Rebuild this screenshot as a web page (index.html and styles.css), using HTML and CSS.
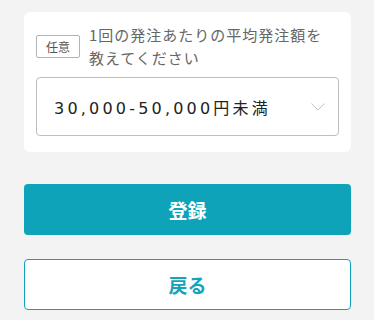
FILE: index.html
```html
<!DOCTYPE html>
<html lang="ja">
<head>
  <meta charset="UTF-8" />
  <meta name="viewport" content="width=device-width, initial-scale=1.0" />
  <title>発注額</title>
  <link rel="stylesheet" href="styles.css">
</head>
<body>
  <div class="page">
    <div class="card">
      <div class="question">
        <span class="badge">任意</span>
        <p class="question-text">1回の発注あたりの平均発注額を教えてください</p>
      </div>
      <div class="select">
        <span class="select-value">30,000-50,000円未満</span>
        <svg class="chevron" width="14" height="8" viewBox="0 0 14 8">
          <polyline points="0.5,0.5 7,7 13.5,0.5" fill="none" stroke="#c4c4c4" stroke-width="1" />
        </svg>
      </div>
    </div>

    <div class="actions">
      <button class="btn btn-primary">登録</button>
      <button class="btn btn-outline">戻る</button>
    </div>
  </div>
</body>
</html>
```

FILE: styles.css
```css
body {
  margin: 0;
  background-color: #f3f3f3;
  font-family: "Noto Sans CJK JP", "Noto Sans", sans-serif;
}

.page {
  padding: 12px 23px 0 24px;
}

.card {
  background-color: #fff;
  border-radius: 6px;
  padding: 11px 12px 16px;
}

.question {
  display: flex;
  align-items: center;
  gap: 9px;
}

.badge {
  flex: none;
  width: 42px;
  height: 21px;
  border: 1px solid #b3b3b3;
  border-radius: 2px;
  font-size: 12px;
  line-height: 21px;
  text-align: center;
  color: #555;
}

.question-text {
  margin: 0;
  padding-right: 8px;
  font-size: 15px;
  line-height: 23px;
  letter-spacing: 1px;
  color: #666;
}

.select {
  margin-top: 8px;
  height: 57px;
  border: 1px solid #bdbdbd;
  border-radius: 4px;
  display: flex;
  align-items: center;
  justify-content: space-between;
  padding: 0 13px 0 17px;
}

.select-value {
  font-family: "DejaVu Sans", "Noto Sans CJK JP", sans-serif;
  font-size: 16px;
  letter-spacing: 0.2em;
  color: #222;
}

.actions {
  margin-top: 32px;
  display: flex;
  flex-direction: column;
  gap: 24px;
}

.btn {
  height: 51px;
  border-radius: 4px;
  font-family: "Noto Sans CJK JP", sans-serif;
  font-size: 19px;
  font-weight: bold;
  cursor: pointer;
}

.btn-primary {
  background-color: #0fa3ba;
  border: none;
  color: #fff;
}

.btn-outline {
  background-color: #fff;
  border: 1px solid #0fa3ba;
  color: #17a2bb;
}
```
